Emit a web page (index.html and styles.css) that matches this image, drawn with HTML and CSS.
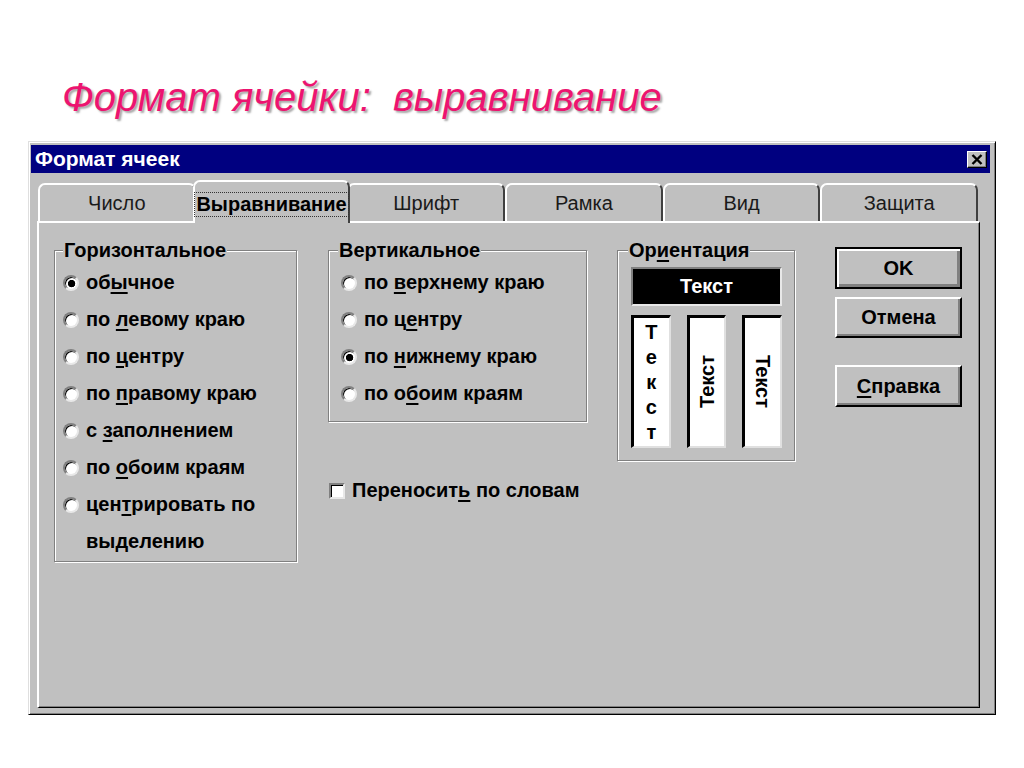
FILE: index.html
```html
<!DOCTYPE html>
<html lang="ru">
<head>
    <meta charset="UTF-8">
    <meta name="viewport" content="width=device-width, initial-scale=1.0">
    <title>Формат ячейки: выравнивание</title>
    <link rel="stylesheet" href="styles.css">
</head>
<body>
    <h1 class="slide-title">Формат ячейки:  выравнивание</h1>

    <div class="dialog">
        <div class="titlebar">
            <span>Формат ячеек</span>
            <span class="close-btn">
                <svg width="12" height="11" viewBox="0 0 12 11">
                    <path d="M1.5 1 L10.5 10 M10.5 1 L1.5 10" stroke="#000" stroke-width="2.4" fill="none"/>
                </svg>
            </span>
        </div>

        <div class="tabs">
            <div class="tab">Число</div>
            <div class="tab active"><span>Выравнивание</span></div>
            <div class="tab">Шрифт</div>
            <div class="tab">Рамка</div>
            <div class="tab">Вид</div>
            <div class="tab">Защита</div>
        </div>

        <div class="panel">
            <!-- Horizontal alignment -->
            <fieldset class="group group-horiz">
                <legend>Горизонтальное</legend>
                <div class="option"><span class="radio checked"></span><span>об<u>ы</u>чное</span></div>
                <div class="option"><span class="radio"></span><span>по <u>л</u>евому краю</span></div>
                <div class="option"><span class="radio"></span><span>по <u>ц</u>ентру</span></div>
                <div class="option"><span class="radio"></span><span>по <u>п</u>равому краю</span></div>
                <div class="option"><span class="radio"></span><span>с <u>з</u>аполнением</span></div>
                <div class="option"><span class="radio"></span><span>по <u>о</u>боим краям</span></div>
                <div class="option"><span class="radio"></span><span>цен<u>т</u>рировать по<br>выделению</span></div>
            </fieldset>

            <!-- Vertical alignment + wrap -->
            <div class="col-mid">
                <fieldset class="group group-vert">
                    <legend>Вертикальное</legend>
                    <div class="option"><span class="radio"></span><span>по <u>в</u>ерхнему краю</span></div>
                    <div class="option"><span class="radio"></span><span>по ц<u>е</u>нтру</span></div>
                    <div class="option"><span class="radio checked"></span><span>по <u>н</u>ижнему краю</span></div>
                    <div class="option"><span class="radio"></span><span>по о<u>б</u>оим краям</span></div>
                </fieldset>
                <div class="check-row"><span class="checkbox"></span><span>Переносит<u>ь</u> по словам</span></div>
            </div>

            <!-- Orientation -->
            <fieldset class="group group-orient">
                <legend>Ор<u>и</u>ентация</legend>
                <div class="orient-h">Текст</div>
                <div class="orient-row">
                    <div class="orient-box stacked">
                        <span>Т</span><span>е</span><span>к</span><span>с</span><span>т</span>
                    </div>
                    <div class="orient-box"><span class="rot-up">Текст</span></div>
                    <div class="orient-box"><span class="rot-down">Текст</span></div>
                </div>
            </fieldset>

            <div class="buttons">
                <button class="btn btn-default">OK</button>
                <button class="btn btn-cancel">Отмена</button>
                <button class="btn"><u>С</u>правка</button>
            </div>
        </div>
    </div>
</body>
</html>
```

FILE: styles.css
```css
* {
    box-sizing: border-box;
}

body {
    margin: 0;
    background: #ffffff;
    font-family: 'Liberation Sans', Arial, sans-serif;
}

u {
    text-decoration-thickness: 2px;
    text-underline-offset: 3px;
}

/* Slide heading */
.slide-title {
    margin: 73px 0 0 62px;
    font-size: 40px;
    line-height: 48px;
    font-style: italic;
    font-weight: normal;
    color: #ec1470;
    text-shadow: 2px 2px 2px rgba(0,0,0,0.35);
    white-space: pre;
}

/* Dialog window */
.dialog {
    width: 968px;
    height: 574px;
    margin: 20px 0 0 28px;
    padding: 3px 5px 0 2px;
    background: #c0c0c0;
    border: 1px solid;
    border-color: #dfdfdf #000 #000 #dfdfdf;
    box-shadow: inset 1px 1px #fff, inset -1px -1px #808080;
}

.titlebar {
    height: 28px;
    background: #000080;
    color: #fff;
    display: flex;
    align-items: center;
    justify-content: space-between;
    padding: 0 3px 0 4px;
    font-size: 21px;
    font-weight: bold;
}

.close-btn {
    width: 20px;
    height: 17px;
    background: #c0c0c0;
    border: 1px solid;
    border-color: #fff #000 #000 #fff;
    box-shadow: inset -1px -1px #808080;
    display: flex;
    align-items: center;
    justify-content: center;
}

/* Tabs */
.tabs {
    display: flex;
    align-items: flex-end;
    height: 41px;
    margin: 7px 12px 0 7px;
}

.tab {
    flex: 1;
    height: 38px;
    display: flex;
    align-items: center;
    justify-content: center;
    border: 2px solid;
    border-bottom: none;
    border-color: #fff #404040 transparent #fff;
    border-radius: 7px 7px 0 0;
    font-size: 20px;
    color: #1a1a1a;
}

.tab.active {
    position: relative;
    z-index: 1;
    height: 43px;
    margin: 0 -3px -2px;
    padding-top: 3px;
    background: #c0c0c0;
    font-weight: bold;
    color: #000;
}

.tab.active span {
    outline: 1px dotted #333;
    padding: 0 1px;
}

/* Tab panel */
.panel {
    height: 487px;
    margin: 0 10px 0 6px;
    padding: 17px 0 0 15px;
    display: flex;
    align-items: flex-start;
    border-style: solid;
    border-width: 2px 1px 1px 2px;
    border-color: #fff #000 #000 #fff;
    box-shadow: inset -1px -1px #808080;
}

.group {
    margin: 0;
    min-width: 0;
    padding: 4px 8px 1px 8px;
    border: 1px solid #808080;
    box-shadow: 1px 1px #fff, inset 1px 1px #fff;
}

.group legend {
    padding: 0 1px;
    font-size: 20px;
    line-height: 20px;
    font-weight: bold;
    background: #c0c0c0;
}

.group-horiz {
    width: 243px;
}

.col-mid {
    width: 259px;
    margin-left: 31px;
}

.group-vert {
    padding: 4px 8px 9px 12px;
}

.group-vert legend {
    margin-left: -3px;
}

.option {
    display: flex;
    align-items: flex-start;
    gap: 7px;
    line-height: 37px;
    font-size: 20px;
    font-weight: bold;
}

.radio {
    flex: none;
    width: 16px;
    height: 16px;
    margin-top: 11px;
    border-radius: 50%;
    background: #fff;
    border: 2px solid;
    border-color: #808080 #e8e8e8 #e8e8e8 #808080;
    box-shadow: inset 1px 1px #000;
}

.radio.checked {
    background: radial-gradient(circle at 55% 55%, #000 0 3.4px, #fff 4px);
}

.check-row {
    display: flex;
    align-items: flex-start;
    gap: 7px;
    margin: 50px 0 0 1px;
    line-height: 37px;
    font-size: 20px;
    font-weight: bold;
}

.checkbox {
    flex: none;
    width: 16px;
    height: 16px;
    margin-top: 11px;
    background: #fff;
    border: 2px solid;
    border-color: #808080 #e8e8e8 #e8e8e8 #808080;
    box-shadow: inset 1px 1px #000;
}

/* Orientation */
.group-orient {
    width: 178px;
    margin-left: 30px;
    padding: 7px 12px 12px 13px;
}

.group-orient legend {
    margin-left: -3px;
}

.orient-h {
    height: 39px;
    display: flex;
    align-items: center;
    justify-content: center;
    background: #000;
    color: #fff;
    font-size: 20px;
    font-weight: bold;
    border: 2px solid;
    border-color: #808080 #e8e8e8 #e8e8e8 #808080;
}

.orient-row {
    display: flex;
    gap: 16px;
    height: 133px;
    margin-top: 9px;
}

.orient-box {
    width: 40px;
    display: flex;
    align-items: center;
    justify-content: center;
    background: #fff;
    border-style: solid;
    border-width: 3px 2px 2px 3px;
    border-color: #000 #e0e0e0 #e0e0e0 #000;
    font-size: 20px;
    font-weight: bold;
}

.orient-box.stacked {
    flex-direction: column;
    justify-content: flex-start;
    padding-top: 2px;
    line-height: 25px;
}

.rot-up {
    writing-mode: vertical-rl;
    transform: rotate(180deg);
}

.rot-down {
    writing-mode: vertical-rl;
}

/* Buttons */
.buttons {
    width: 127px;
    margin-left: 40px;
    padding-top: 7px;
}

.btn {
    display: block;
    width: 127px;
    height: 42px;
    margin-bottom: 27px;
    padding: 0;
    background: #c0c0c0;
    border: 2px solid;
    border-color: #fff #000 #000 #fff;
    box-shadow: inset -2px -2px #808080;
    font-family: 'Liberation Sans', Arial, sans-serif;
    font-size: 20px;
    font-weight: bold;
    color: #000;
}

.btn-default {
    margin-bottom: 8px;
    border-color: #000;
    box-shadow: inset 2px 2px #fff, inset -3px -3px #808080;
}

.btn-cancel {
    height: 41px;
}
```
